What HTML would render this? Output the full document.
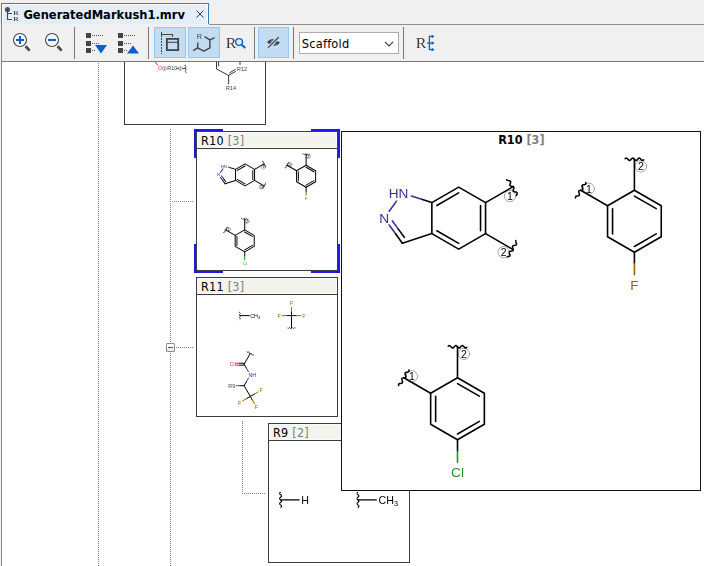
<!DOCTYPE html>
<html>
<head>
<meta charset="utf-8">
<title>GeneratedMarkush1.mrv</title>
<style>
html,body{margin:0;padding:0;background:#fff;}
body{width:704px;height:566px;overflow:hidden;position:relative;}
svg{position:absolute;left:0;top:0;display:block;}
.ui{font-family:"DejaVu Sans Condensed","Liberation Sans",sans-serif;font-size:12.5px;fill:#000;}
.b{font-weight:bold;}
.ar{font-family:"Liberation Sans",sans-serif;}
.se{font-family:"Liberation Serif",serif;}
.px{shape-rendering:crispEdges;}
.bond{fill:none;stroke:#000;stroke-linecap:round;stroke-linejoin:round;}
text{stroke:none;}
.gs{opacity:0.999;}
.wv{fill:none;stroke-width:var(--ww);}
.ac{fill:none;stroke:#858585;stroke-width:var(--cw);}
.an{font-size:10.5px;fill:#000;}
.al{font-size:var(--fs);}
</style>
</head>
<body>
<svg id="main" width="704" height="566" viewBox="0 0 704 566">
<defs>
<mask id="mk" maskUnits="userSpaceOnUse" x="0" y="0" width="704" height="566"><rect width="704" height="566" fill="#fff"/></mask>
<!--DEFS-START-->
<g id="mA"><circle cx="51.3" cy="-22" r="5.7" class="ac"/><text x="51.3" y="-18.3" class="ar an" text-anchor="middle">1</text><circle cx="45" cy="34.1" r="5.7" class="ac"/><text x="45" y="37.8" class="ar an" text-anchor="middle">2</text><path d="M0 -31L26.85 -15.5L26.85 15.5L0 31L-26.85 15.5L-26.85 -15.5Z"/><path d="M-21.85 -12.62L0 -25.23"/><path d="M21.85 -12.62L21.85 12.62"/><path d="M-21.85 12.62L0 25.23"/><path d="M-26.85 -15.5L-37.07 -18.82"/><path d="M-37.07 -18.82L-47.29 -22.14" stroke="#333399"/><path d="M-62.21 -16.99L-69.55 -6.88" stroke="#333399"/><path d="M-69.55 6.88L-62.94 15.98" stroke="#333399"/><path d="M-62.94 15.98L-56.33 25.08"/><path d="M-56.33 25.08L-26.85 15.5"/><path d="M-66.31 2.83L-60.37 11.02" stroke="#333399"/><path d="M-60.37 11.02L-54.42 19.2"/><text x="-56.33" y="-25.08" dy="0.358em" dx="0.44em" class="ar al" fill="#333399" text-anchor="end">HN</text><text x="-74.55" y="0" dy="0.358em" class="ar al" fill="#333399" text-anchor="middle">N</text><path d="M26.85 -15.5L53.69 -31"/><path d="M26.85 15.5L53.69 31"/><path d="M48 -38.39L48.27 -38.01L48.74 -37.75L49.37 -37.58L50.07 -37.45L50.76 -37.32L51.35 -37.12L51.76 -36.82L51.96 -36.41L51.95 -35.87L51.79 -35.24L51.55 -34.57L51.32 -33.9L51.19 -33.29L51.24 -32.79L51.5 -32.4L51.96 -32.13L52.58 -31.96L53.28 -31.83L53.98 -31.7L54.57 -31.51L54.99 -31.21L55.2 -30.8L55.21 -30.27L55.05 -29.65L54.81 -28.97L54.58 -28.31L54.44 -27.7L54.48 -27.18L54.73 -26.79L55.18 -26.52L55.79 -26.34L56.49 -26.21L57.19 -26.08L57.79 -25.89L58.22 -25.6L58.44 -25.2L58.46 -24.67L58.31 -24.05L58.07 -23.38L57.84 -22.71" class="wv"/><path d="M57.25 22.37L57.05 22.79L57.06 23.33L57.23 23.96L57.47 24.64L57.7 25.3L57.82 25.91L57.77 26.41L57.51 26.79L57.04 27.06L56.41 27.23L55.71 27.36L55.02 27.49L54.43 27.69L54.01 27.98L53.81 28.4L53.81 28.93L53.97 29.56L54.21 30.23L54.44 30.9L54.57 31.51L54.53 32.02L54.28 32.4L53.82 32.67L53.2 32.85L52.5 32.98L51.8 33.11L51.21 33.3L50.78 33.59L50.56 34L50.55 34.53L50.71 35.15L50.94 35.82L51.18 36.49L51.32 37.1L51.28 37.62L51.04 38.02L50.6 38.29L49.99 38.47L49.29 38.6L48.59 38.73" class="wv"/></g>
<g id="mB"><circle cx="6.5" cy="-55" r="5.7" class="ac"/><text x="6.5" y="-51.3" class="ar an" text-anchor="middle">2</text><circle cx="-45.6" cy="-32.5" r="5.7" class="ac"/><text x="-45.6" y="-28.8" class="ar an" text-anchor="middle">1</text><path d="M0 -31L26.85 -15.5L26.85 15.5L0 31L-26.85 15.5L-26.85 -15.5Z"/><path d="M0 -25.23L21.85 -12.62"/><path d="M21.85 12.62L0 25.23"/><path d="M-21.85 12.62L-21.85 -12.62"/><path d="M0 -31L0 -62"/><path d="M-26.85 -15.5L-53.69 -31"/><path d="M-9.25 -62.58L-8.79 -63L-8.32 -63.23L-7.86 -63.21L-7.4 -62.96L-6.94 -62.51L-6.47 -61.97L-6.01 -61.43L-5.55 -61.01L-5.09 -60.78L-4.62 -60.79L-4.16 -61.03L-3.7 -61.47L-3.24 -62.02L-2.78 -62.55L-2.31 -62.98L-1.85 -63.22L-1.39 -63.22L-0.93 -62.97L-0.46 -62.54L0 -62L0.46 -61.46L0.93 -61.03L1.39 -60.78L1.85 -60.78L2.31 -61.02L2.78 -61.45L3.24 -61.98L3.7 -62.53L4.16 -62.97L4.62 -63.21L5.09 -63.22L5.55 -62.99L6.01 -62.57L6.47 -62.03L6.94 -61.49L7.4 -61.04L7.86 -60.79L8.32 -60.77L8.79 -61L9.25 -61.42" class="wv"/><path d="M-58.82 -23.28L-58.96 -23.89L-58.92 -24.4L-58.67 -24.8L-58.22 -25.07L-57.61 -25.25L-56.9 -25.38L-56.21 -25.51L-55.61 -25.7L-55.18 -25.98L-54.96 -26.39L-54.94 -26.91L-55.09 -27.53L-55.33 -28.2L-55.56 -28.87L-55.7 -29.49L-55.68 -30.01L-55.44 -30.41L-55 -30.69L-54.39 -30.87L-53.69 -31L-52.99 -31.13L-52.39 -31.31L-51.95 -31.59L-51.71 -31.99L-51.69 -32.51L-51.83 -33.13L-52.06 -33.8L-52.3 -34.47L-52.45 -35.09L-52.43 -35.61L-52.21 -36.02L-51.78 -36.3L-51.18 -36.49L-50.48 -36.62L-49.78 -36.75L-49.17 -36.93L-48.71 -37.2L-48.47 -37.6L-48.43 -38.11L-48.57 -38.72" class="wv"/><path d="M0 31L0 42.25"/><path d="M0 42.25L0 53.5" stroke="#996600"/><text x="0" y="63.6" dy="0.358em" class="ar al" fill="#996600" text-anchor="middle">F</text></g>
<g id="mC"><circle cx="6.5" cy="-55" r="5.7" class="ac"/><text x="6.5" y="-51.3" class="ar an" text-anchor="middle">2</text><circle cx="-45.6" cy="-32.5" r="5.7" class="ac"/><text x="-45.6" y="-28.8" class="ar an" text-anchor="middle">1</text><path d="M0 -31L26.85 -15.5L26.85 15.5L0 31L-26.85 15.5L-26.85 -15.5Z"/><path d="M0 -25.23L21.85 -12.62"/><path d="M21.85 12.62L0 25.23"/><path d="M-21.85 12.62L-21.85 -12.62"/><path d="M0 -31L0 -62"/><path d="M-26.85 -15.5L-53.69 -31"/><path d="M-9.25 -62.58L-8.79 -63L-8.32 -63.23L-7.86 -63.21L-7.4 -62.96L-6.94 -62.51L-6.47 -61.97L-6.01 -61.43L-5.55 -61.01L-5.09 -60.78L-4.62 -60.79L-4.16 -61.03L-3.7 -61.47L-3.24 -62.02L-2.78 -62.55L-2.31 -62.98L-1.85 -63.22L-1.39 -63.22L-0.93 -62.97L-0.46 -62.54L0 -62L0.46 -61.46L0.93 -61.03L1.39 -60.78L1.85 -60.78L2.31 -61.02L2.78 -61.45L3.24 -61.98L3.7 -62.53L4.16 -62.97L4.62 -63.21L5.09 -63.22L5.55 -62.99L6.01 -62.57L6.47 -62.03L6.94 -61.49L7.4 -61.04L7.86 -60.79L8.32 -60.77L8.79 -61L9.25 -61.42" class="wv"/><path d="M-58.82 -23.28L-58.96 -23.89L-58.92 -24.4L-58.67 -24.8L-58.22 -25.07L-57.61 -25.25L-56.9 -25.38L-56.21 -25.51L-55.61 -25.7L-55.18 -25.98L-54.96 -26.39L-54.94 -26.91L-55.09 -27.53L-55.33 -28.2L-55.56 -28.87L-55.7 -29.49L-55.68 -30.01L-55.44 -30.41L-55 -30.69L-54.39 -30.87L-53.69 -31L-52.99 -31.13L-52.39 -31.31L-51.95 -31.59L-51.71 -31.99L-51.69 -32.51L-51.83 -33.13L-52.06 -33.8L-52.3 -34.47L-52.45 -35.09L-52.43 -35.61L-52.21 -36.02L-51.78 -36.3L-51.18 -36.49L-50.48 -36.62L-49.78 -36.75L-49.17 -36.93L-48.71 -37.2L-48.47 -37.6L-48.43 -38.11L-48.57 -38.72" class="wv"/><path d="M0 31L0 42.25"/><path d="M0 42.25L0 53.5" stroke="#1a9a1a"/><text x="0" y="63.6" dy="0.358em" class="ar al" fill="#1a9a1a" text-anchor="middle">Cl</text></g>
<g id="fMe"><path d="M-0.3 -9.5L-0.81 -9.03L-1.15 -8.55L-1.25 -8.07L-1.09 -7.6L-0.71 -7.12L-0.18 -6.65L0.39 -6.17L0.87 -5.7L1.18 -5.22L1.24 -4.75L1.05 -4.28L0.63 -3.8L0.09 -3.33L-0.47 -2.85L-0.94 -2.38L-1.21 -1.9L-1.23 -1.43L-0.99 -0.95L-0.55 -0.47L0 0L0.55 0.47L0.99 0.95L1.23 1.43L1.21 1.9L0.94 2.38L0.47 2.85L-0.09 3.32L-0.63 3.8L-1.05 4.28L-1.24 4.75L-1.18 5.22L-0.87 5.7L-0.39 6.18L0.18 6.65L0.71 7.12L1.09 7.6L1.25 8.07L1.15 8.55L0.81 9.02L0.3 9.5" class="wv"/><path d="M0 0L23.5 0"/><text x="26" y="0" dy="0.358em" class="ar al" fill="#000">CH<tspan style="font-size:0.73em" dy="0.3em">3</tspan></text></g>
<g id="fH"><path d="M-0.3 -9.5L-0.81 -9.03L-1.15 -8.55L-1.25 -8.07L-1.09 -7.6L-0.71 -7.12L-0.18 -6.65L0.39 -6.17L0.87 -5.7L1.18 -5.22L1.24 -4.75L1.05 -4.28L0.63 -3.8L0.09 -3.33L-0.47 -2.85L-0.94 -2.38L-1.21 -1.9L-1.23 -1.43L-0.99 -0.95L-0.55 -0.47L0 0L0.55 0.47L0.99 0.95L1.23 1.43L1.21 1.9L0.94 2.38L0.47 2.85L-0.09 3.32L-0.63 3.8L-1.05 4.28L-1.24 4.75L-1.18 5.22L-0.87 5.7L-0.39 6.18L0.18 6.65L0.71 7.12L1.09 7.6L1.25 8.07L1.15 8.55L0.81 9.02L0.3 9.5" class="wv"/><path d="M0 0L23.5 0"/><text x="26" y="0" dy="0.358em" class="ar al" fill="#000">H</text></g>
<g id="fCF3"><path d="M0 0L0 -10.25"/><path d="M0 -10.25L0 -20.5" stroke="#996600"/><path d="M0 0L-11.5 0"/><path d="M-11.5 0L-23 0" stroke="#996600"/><path d="M0 0L11.5 0"/><path d="M11.5 0L23 0" stroke="#996600"/><path d="M0 0L0 31"/><path d="M-9.25 31.58L-8.79 32L-8.32 32.23L-7.86 32.21L-7.4 31.96L-6.94 31.51L-6.47 30.97L-6.01 30.43L-5.55 30.01L-5.09 29.78L-4.62 29.79L-4.16 30.03L-3.7 30.47L-3.24 31.02L-2.78 31.55L-2.31 31.98L-1.85 32.22L-1.39 32.22L-0.93 31.97L-0.46 31.54L0 31L0.46 30.46L0.93 30.03L1.39 29.78L1.85 29.78L2.31 30.02L2.78 30.45L3.24 30.98L3.7 31.53L4.16 31.97L4.62 32.21L5.09 32.22L5.55 31.99L6.01 31.57L6.47 31.03L6.94 30.49L7.4 30.04L7.86 29.79L8.32 29.77L8.79 30L9.25 30.42" class="wv"/><text x="0" y="-31" dy="0.358em" class="ar al" fill="#996600" text-anchor="middle">F</text><text x="-31" y="0" dy="0.358em" class="ar al" fill="#996600" text-anchor="middle">F</text><text x="31" y="0" dy="0.358em" class="ar al" fill="#996600" text-anchor="middle">F</text></g>
<g id="fAm"><path d="M0 0L15.5 -26.85"/><path d="M7.2 -30.97L7.39 -30.37L7.68 -29.95L8.09 -29.73L8.61 -29.72L9.24 -29.87L9.91 -30.11L10.58 -30.34L11.19 -30.48L11.71 -30.45L12.1 -30.21L12.38 -29.76L12.56 -29.15L12.69 -28.45L12.82 -27.75L13.01 -27.15L13.29 -26.71L13.69 -26.49L14.21 -26.47L14.83 -26.61L15.5 -26.85L16.17 -27.08L16.79 -27.23L17.31 -27.21L17.71 -26.98L17.99 -26.54L18.18 -25.94L18.31 -25.24L18.44 -24.54L18.62 -23.93L18.9 -23.48L19.29 -23.24L19.81 -23.21L20.42 -23.35L21.09 -23.58L21.76 -23.82L22.39 -23.97L22.91 -23.96L23.32 -23.75L23.61 -23.32L23.8 -22.72" class="wv"/><path d="M0 -2.4L-11.25 -2.4"/><path d="M-11.25 -2.4L-22.5 -2.4" stroke="#ff1a1a"/><path d="M0 2.4L-11.25 2.4"/><path d="M-11.25 2.4L-22.5 2.4" stroke="#ff1a1a"/><path d="M0 0L5.38 9.31"/><path d="M5.38 9.31L10.75 18.62" stroke="#333399"/><path d="M10.75 35.07L5.38 44.38" stroke="#333399"/><path d="M5.38 44.38L0 53.69"/><path d="M0 53.69L-10 53.69"/><path d="M-10 53.69L-20 53.69" stroke="#555"/><path d="M0 53.69L15.5 80.54"/><path d="M15.5 80.54L25.24 74.92"/><path d="M25.24 74.92L34.99 69.29" stroke="#996600"/><path d="M15.5 80.54L5.76 86.17"/><path d="M5.76 86.17L-3.99 91.79" stroke="#996600"/><path d="M15.5 80.54L20.88 89.85"/><path d="M20.88 89.85L26.25 99.16" stroke="#996600"/><text x="-31" y="0" dy="0.358em" class="ar al" fill="#ff1a1a" text-anchor="middle">O</text><text x="15.5" y="26.85" dy="0.358em" dx="-0.36em" class="ar al" fill="#333399" text-anchor="start">NH</text><text x="-31" y="53.69" dy="0.358em" class="ar al" fill="#444" text-anchor="middle">R9</text><text x="42.35" y="65.04" dy="0.358em" class="ar al" fill="#996600" text-anchor="middle">F</text><text x="-11.35" y="96.04" dy="0.358em" class="ar al" fill="#996600" text-anchor="middle">F</text><text x="31" y="107.39" dy="0.358em" class="ar al" fill="#996600" text-anchor="middle">F</text></g>
<!--DEFS-END-->
</defs>
<!-- chrome backgrounds -->
<g class="px">
<rect x="0" y="0" width="704" height="62" fill="#f0f0f0"/>
<rect x="0" y="62" width="2" height="504" fill="#f0f0f0"/>
<rect x="2" y="62" width="702" height="504" fill="#ffffff"/>
<!-- tab -->
<rect x="1" y="3" width="208" height="21" fill="#3b7fb5"/>
<rect x="2" y="4" width="206" height="20" fill="#ffffff"/>
<rect x="3" y="5" width="204" height="19" fill="#e2effb"/>
<!-- pane borders -->
<rect x="209" y="24" width="495" height="1" fill="#8e8f8f"/>
<rect x="1" y="24" width="1" height="542" fill="#828790"/>
<rect x="2" y="61" width="702" height="1" fill="#7a7a7a"/>
<!-- toolbar separators -->
<rect x="74" y="27" width="1" height="32" fill="#777"/>
<rect x="148" y="27" width="1" height="32" fill="#777"/>
<rect x="254" y="27" width="1" height="32" fill="#777"/>
<rect x="293" y="27" width="1" height="32" fill="#777"/>
<rect x="403" y="27" width="1" height="32" fill="#777"/>
<!-- toggle buttons -->
<rect x="154" y="27" width="32" height="31" fill="#90c8f6"/>
<rect x="155" y="28" width="30" height="29" fill="#c2dcf3"/>
<rect x="188" y="27" width="32" height="31" fill="#90c8f6"/>
<rect x="189" y="28" width="30" height="29" fill="#c2dcf3"/>
<rect x="258" y="27" width="31" height="31" fill="#90c8f6"/>
<rect x="259" y="28" width="29" height="29" fill="#c2dcf3"/>
<!-- combobox -->
<rect x="299" y="32" width="100" height="22" fill="#adadad"/>
<rect x="300" y="33" width="98" height="20" fill="#ffffff"/>
</g>
<!--TOOLBAR-START-->
<!-- tab icon + title -->
<g>
<circle cx="7.5" cy="9.5" r="2.6" fill="#555"/>
<path d="M7.5 9.5V19.5H12M7.5 13.5H12" fill="none" stroke="#444" stroke-width="1.1"/>
<g class="gs" mask="url(#mk)"><text class="se" transform="translate(13 14.8) scale(1.2 0.94)" font-size="7.4" fill="#333">R</text></g>
<g class="gs" mask="url(#mk)"><text class="se" transform="translate(13 20.7) scale(1.2 0.94)" font-size="7.4" fill="#333">R</text></g>
<text class="ui b" x="23.4" y="18.8" style="font-size:12.8px">GeneratedMarkush1.mrv</text>
<path d="M196.5 10.5L203.5 17.5M203.5 10.5L196.5 17.5" stroke="#3a3a3a" stroke-width="1" fill="none"/>
</g>
<!-- zoom in -->
<g fill="none">
<circle cx="20" cy="40" r="6.5" stroke="#484848" stroke-width="1.1" fill="#f6f6f6"/>
<path d="M25.6 46.2L29.6 50.6" stroke="#4a4a4a" stroke-width="2.8"/>
<path d="M16 40H24M20 36V44" stroke="#0a5fd0" stroke-width="2.1"/>
<circle cx="52" cy="40" r="6.5" stroke="#484848" stroke-width="1.1" fill="#f6f6f6"/>
<path d="M57.6 46.2L61.6 50.6" stroke="#4a4a4a" stroke-width="2.8"/>
<path d="M48 40H56" stroke="#0a5fd0" stroke-width="2.1"/>
</g>
<!-- expand / collapse -->
<g class="px" fill="#444">
<rect x="86" y="33" width="5" height="5"/><rect x="86" y="41" width="5" height="5"/><rect x="86" y="48" width="5" height="5"/>
<rect x="118" y="33" width="5" height="5"/><rect x="118" y="41" width="5" height="5"/><rect x="118" y="48" width="5" height="5"/>
<g fill="#555">
<rect x="92" y="35" width="1" height="1"/><rect x="94" y="35" width="1" height="1"/><rect x="96" y="35" width="1" height="1"/><rect x="98" y="35" width="1" height="1"/><rect x="100" y="35" width="1" height="1"/><rect x="102" y="35" width="1" height="1"/>
<rect x="92" y="43" width="1" height="1"/><rect x="94" y="43" width="1" height="1"/><rect x="96" y="43" width="1" height="1"/><rect x="98" y="43" width="1" height="1"/>
<rect x="92" y="50" width="1" height="1"/><rect x="94" y="50" width="1" height="1"/>
<rect x="124" y="35" width="1" height="1"/><rect x="126" y="35" width="1" height="1"/><rect x="128" y="35" width="1" height="1"/><rect x="130" y="35" width="1" height="1"/><rect x="132" y="35" width="1" height="1"/><rect x="134" y="35" width="1" height="1"/>
<rect x="124" y="43" width="1" height="1"/><rect x="126" y="43" width="1" height="1"/><rect x="128" y="43" width="1" height="1"/><rect x="130" y="43" width="1" height="1"/>
<rect x="124" y="50" width="1" height="1"/><rect x="126" y="50" width="1" height="1"/>
</g>
</g>
<path d="M95 45H107L101 53.6Z" fill="#0a5fd0"/>
<path d="M127 53.6H139L133 45.4Z" fill="#0a5fd0"/>
<!-- toggle icon 1 -->
<g fill="none" stroke="#444">
<path d="M161.5 32V54" stroke-width="1" stroke-dasharray="2 1" class="px"/>
<path d="M161 34.5H172.5V37" stroke-width="1" class="px"/>
<rect x="166.9" y="38.9" width="11.3" height="11.2" stroke-width="1.8"/>
<path d="M167 42.3H178" stroke-width="1.1"/>
</g>
<!-- toggle icon 2 -->
<g fill="none" stroke="#444" stroke-width="1.4" stroke-linejoin="round">
<path d="M193.2 50.6L197.7 47.9V42.5M197.7 47.9L203.8 51.1L209.9 47.9V39.8L204.5 36.6M209.9 39.8L214.6 37.6"/>
</g>
<g class="gs" mask="url(#mk)"><text class="ar" x="196.7" y="39.4" font-size="7.3" fill="#444">R</text></g>
<!-- R search -->
<g class="gs" mask="url(#mk)"><text class="se" transform="translate(225.7 47.9) scale(1.1 1.03)" font-size="14.5" fill="#3c3c3c">R</text></g>
<circle cx="239.1" cy="42" r="3.4" fill="none" stroke="#0a5fd0" stroke-width="1.4"/>
<path d="M241.8 44.8L245.3 48" stroke="#0a5fd0" stroke-width="2.1"/>
<!-- eye crossed -->
<g fill="#444" stroke="none">
<path id="wing" d="M267 42.4C268.6 40.2 271 39 273.8 39.1L270.4 43.9C269 43.7 268 43.2 267 42.4ZM271.1 42L272.3 40.4L271.6 40.6L270.6 41.9Z" fill-rule="evenodd"/>
<use href="#wing" transform="rotate(180 273.45 42.45)"/>
<path d="M269.6 46.2L277.2 38.7" stroke="#c8e0f4" stroke-width="3" fill="none"/><path d="M268.4 47.4L278.4 37.5" stroke="#444" stroke-width="1.25" stroke-linecap="round" fill="none"/>
</g>
<!-- combobox label -->
<text class="ui" x="301.8" y="47.8" style="font-size:12.7px;letter-spacing:0.2px">Scaffold</text>
<path d="M385 42L389 46L393 42" fill="none" stroke="#444" stroke-width="1.1"/>
<!-- R bracket -->
<g class="gs" mask="url(#mk)"><text class="se" transform="translate(415.7 47.9) scale(1.1 1.03)" font-size="14.5" fill="#3c3c3c">R</text></g>
<g fill="none" stroke="#0a5fd0" stroke-width="1.3">
<path d="M432.5 36.4H429.4V49.6H432.5M427 43.1H432.5"/>
</g>
<path d="M431.7 34.5L434.5 36.4L431.7 38.3ZM431.7 41.2L434.5 43.1L431.7 45ZM431.7 47.7L434.5 49.6L431.7 51.5Z" fill="#0a5fd0"/>
<!--TOOLBAR-END-->
<!--CONTENT-START-->
<g class="px">
<path d="M98.5 63V566" stroke="#808080" stroke-width="1" stroke-dasharray="1 1" fill="none"/>
<path d="M170.5 129V566" stroke="#808080" stroke-width="1" stroke-dasharray="1 1" fill="none"/>
<path d="M170 201.5H193" stroke="#808080" stroke-width="1" stroke-dasharray="1 1" fill="none"/>
<path d="M176 347.5H193" stroke="#808080" stroke-width="1" stroke-dasharray="1 1" fill="none"/>
<path d="M242.5 421V494" stroke="#808080" stroke-width="1" stroke-dasharray="1 1" fill="none"/>
<path d="M242 493.5H265" stroke="#808080" stroke-width="1" stroke-dasharray="1 1" fill="none"/>
<rect x="124" y="62" width="1" height="63" fill="#3c3c3c"/><rect x="265" y="62" width="1" height="63" fill="#3c3c3c"/><rect x="124" y="124" width="142" height="1" fill="#3c3c3c"/>
<rect x="194" y="129" width="29" height="2" fill="#1a1aee"/>
<rect x="194" y="129" width="2" height="29" fill="#1a1aee"/>
<rect x="311" y="129" width="29" height="2" fill="#1a1aee"/>
<rect x="338" y="129" width="2" height="29" fill="#1a1aee"/>
<rect x="194" y="271" width="29" height="2" fill="#1a1aee"/>
<rect x="194" y="244" width="2" height="29" fill="#1a1aee"/>
<rect x="311" y="271" width="29" height="2" fill="#1a1aee"/>
<rect x="338" y="244" width="2" height="29" fill="#1a1aee"/>
<rect x="196" y="131" width="142" height="140" fill="#3c3c3c"/><rect x="197" y="132" width="140" height="138" fill="#fff"/><rect x="197" y="132" width="140" height="16" fill="#fbfbf8"/><rect x="198" y="133" width="138" height="14" fill="#f4f4ef"/><rect x="197" y="148" width="140" height="1" fill="#3c3c3c"/>
<rect x="196" y="277" width="142" height="140" fill="#3c3c3c"/><rect x="197" y="278" width="140" height="138" fill="#fff"/><rect x="197" y="278" width="140" height="16" fill="#fbfbf8"/><rect x="198" y="279" width="138" height="14" fill="#f4f4ef"/><rect x="197" y="294" width="140" height="1" fill="#3c3c3c"/>
<rect x="268" y="423" width="142" height="140" fill="#3c3c3c"/><rect x="269" y="424" width="140" height="138" fill="#fff"/><rect x="269" y="424" width="140" height="16" fill="#fbfbf8"/><rect x="270" y="425" width="138" height="14" fill="#f4f4ef"/><rect x="269" y="440" width="140" height="1" fill="#3c3c3c"/>
<rect x="166" y="343" width="9" height="9" rx="1.5" fill="#8b8b8b" style="shape-rendering:auto"/><rect x="167" y="344" width="7" height="7" fill="#fff"/><rect x="167" y="348" width="7" height="3" fill="#ececec"/><rect x="168" y="347" width="5" height="1" fill="#3a4fa8"/>
</g>
<text class="ui" x="201" y="144.8" style="letter-spacing:0.25px">R10 <tspan fill="#808080">[3]</tspan></text>
<text class="ui" x="201" y="290.8" style="letter-spacing:0.25px">R11 <tspan fill="#808080">[3]</tspan></text>
<text class="ui" x="273" y="436.8" style="letter-spacing:0.25px">R9 <tspan fill="#808080">[2]</tspan></text>
<g class="gs">
<g class="bond">
<g stroke-width="0.9" stroke="#222">
<path d="M155.4 62L157.6 65.2" stroke="#ff1a1a"/>
<path d="M216.5 62V69L228.6 75.4L235.6 71.4M218.6 62V66M229.6 72.9L235.2 69.4M228.6 75.4V83.8M240 62V64.4"/>
<path d="M185.51 65L185.3 65.2L185.18 65.39L185.16 65.59L185.24 65.78L185.42 65.98L185.66 66.17L185.91 66.37L186.11 66.56L186.23 66.76L186.24 66.95L186.14 67.15L185.96 67.34L185.72 67.54L185.48 67.73L185.28 67.93L185.17 68.12L185.16 68.32L185.27 68.51L185.46 68.71L185.7 68.9L185.94 69.09L186.13 69.29L186.24 69.48L186.23 69.68L186.12 69.88L185.92 70.07L185.68 70.27L185.44 70.46L185.26 70.66L185.16 70.85L185.17 71.05L185.29 71.24L185.49 71.44L185.74 71.63L185.97 71.83L186.16 72.02L186.24 72.22L186.22 72.41L186.1 72.61L185.89 72.8" class="wv"/>
<path d="M177.2 68.4H178.5M182.8 68.4H185.6"/>
<circle cx="164.4" cy="68.6" r="2.1" stroke="#777" stroke-width="0.45"/><circle cx="180.4" cy="68.6" r="2.1" stroke="#777" stroke-width="0.45"/>
</g>
<use href="#mA" transform="translate(245.05 174.9) scale(0.355)" stroke-width="2.82" style="--cw:1.69;--fs:11.83px;--ww:2.11"/>
<use href="#mB" transform="translate(306.1 176.2) scale(0.355)" stroke-width="2.82" style="--cw:1.69;--fs:11.83px;--ww:2.11"/>
<use href="#mC" transform="translate(244.7 240.9) scale(0.355)" stroke-width="2.82" style="--cw:1.69;--fs:11.83px;--ww:2.11"/>
<use href="#fMe" transform="translate(239.9 315.6) scale(0.4)" stroke-width="2.5" style="--cw:1.25;--fs:13.25px;--ww:1.88"/>
<use href="#fCF3" transform="translate(291.5 315.6) scale(0.4)" stroke-width="2.5" style="--cw:1.25;--fs:13.25px;--ww:1.88"/>
<use href="#fAm" transform="translate(244.1 364.2) scale(0.4)" stroke-width="2.5" style="--cw:1.25;--fs:13.25px;--ww:1.88"/>
<use href="#fH" transform="translate(280.6 499.8) scale(0.79)" stroke-width="1.52" style="--cw:0.76;--fs:13.54px;--ww:1.44"/>
<use href="#fMe" transform="translate(357.9 499.8) scale(0.79)" stroke-width="1.52" style="--cw:0.76;--fs:13.54px;--ww:1.44"/>
</g>
<text class="ar" x="158" y="70" font-size="5.4" fill="#ff1a1a">O</text>
<text class="ar" x="167.3" y="70" font-size="5.4" fill="#333">R10</text>
<text class="ar" x="164.4" y="70" font-size="3.9" fill="#222" text-anchor="middle">1</text><text class="ar" x="180.4" y="70" font-size="3.9" fill="#222" text-anchor="middle">2</text>
<text class="ar" x="237" y="71.2" font-size="5.4" fill="#333">R12</text>
<text class="ar" x="226" y="89.6" font-size="5.4" fill="#333">R14</text>
</g>
<g class="px"><rect x="341" y="131" width="360" height="360" fill="#111"/><rect x="342" y="132" width="358" height="358" fill="#fff"/></g>
<text class="ui b" x="498.2" y="143.8">R10 <tspan fill="#808080">[3]</tspan></text>
<g class="bond gs">
<use href="#mA" transform="translate(458.7 218.1) scale(1)" stroke-width="1.6" style="--cw:0.7;--fs:13.6px;--ww:1.52"/>
<use href="#mB" transform="translate(634.4 221.3) scale(1)" stroke-width="1.6" style="--cw:0.7;--fs:13.6px;--ww:1.52"/>
<use href="#mC" transform="translate(457.5 408.8) scale(1)" stroke-width="1.6" style="--cw:0.7;--fs:13.6px;--ww:1.52"/>
</g>
<!--CONTENT-END-->
</svg>
</body>
</html>
